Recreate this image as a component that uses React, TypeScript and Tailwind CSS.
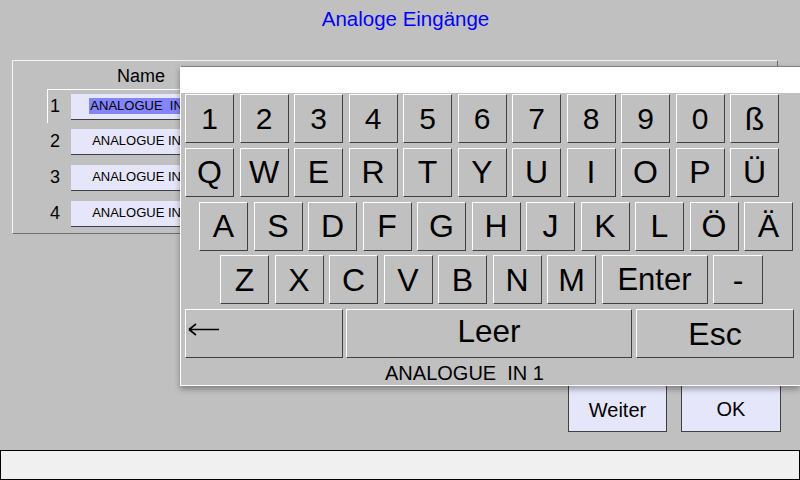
const font = { fontFamily: '"Liberation Sans", Arial, sans-serif' };

const rows = [
  { label: '1', text: 'ANALOGUE  IN 1', active: true },
  { label: '2', text: 'ANALOGUE IN 2' },
  { label: '3', text: 'ANALOGUE IN 3' },
  { label: '4', text: 'ANALOGUE IN 4' },
];

const Key = ({ label, w = 'w-[49px]', size = 'text-[32px]', align = 'justify-center' }: { label: React.ReactNode; w?: string; size?: string; align?: string }) => (
  <div
    className={`${w} ${size} ${align} h-[49px] flex items-center shrink-0 bg-[#c0c0c0] border border-t-white border-l-white border-r-[#404040] border-b-[#404040] text-black leading-none`}
  >
    {label}
  </div>
);

// dünner Pfeil nach links (Backspace)
const ArrowLeft = () => (
  <svg width="34" height="49" viewBox="0 0 34 49" className="-mt-[8px]">
    <path d="M3 24.5 H33 M3 24.5 L10 19 M3 24.5 L10 30" stroke="#000" strokeWidth="1.6" fill="none" />
  </svg>
);

const Keyboard = () => {
  const digits = ['1', '2', '3', '4', '5', '6', '7', '8', '9', '0'];
  const row2 = ['Q', 'W', 'E', 'R', 'T', 'Y', 'U', 'I', 'O', 'P', 'Ü'];
  const row3 = ['A', 'S', 'D', 'F', 'G', 'H', 'J', 'K', 'L', 'Ö', 'Ä'];
  const row4 = ['Z', 'X', 'C', 'V', 'B', 'N', 'M'];

  return (
    <div className="absolute left-[180px] top-[66px] w-[620px] h-[320px] bg-[#c0c0c0] border-t border-t-[#808080] border-l border-l-white border-b border-b-white shadow-[0_3px_6px_rgba(0,0,0,0.35)] flex flex-col">
      <div className="h-[26px] bg-white shrink-0" />
      <div className="pt-[1px] flex flex-col gap-[4.75px]">
        <div className="flex gap-[5.5px] pl-[4px]">
          {digits.map((d) => (
            <Key key={d} label={d} size="text-[30px]" />
          ))}
          <Key label="ß" />
        </div>
        <div className="flex gap-[5.5px] pl-[4px]">
          {row2.map((k) => (
            <Key key={k} label={k} />
          ))}
        </div>
        <div className="flex gap-[5.5px] pl-[18px]">
          {row3.map((k) => (
            <Key key={k} label={k} />
          ))}
        </div>
        <div className="flex gap-[5.5px] pl-[39px]">
          {row4.map((k) => (
            <Key key={k} label={k} />
          ))}
          <Key label="Enter" w="w-[106px]" size="text-[31px]" />
          <Key label="-" w="w-[50px]" />
        </div>
        <div className="flex pl-[4px]">
          <Key label={<ArrowLeft />} w="w-[158px]" align="justify-start" />
          <div className="w-[3px]" />
          <div className="w-[286px] h-[49px] shrink-0 flex justify-center pt-[6px] text-[31.5px] leading-none bg-[#c0c0c0] border border-t-white border-l-white border-r-[#404040] border-b-[#404040]">
            Leer
          </div>
          <div className="w-[4px]" />
          <Key label="Esc" w="w-[158px]" />
        </div>
      </div>
      <div className="flex-1 flex items-center justify-center text-[20px] pr-[52px] whitespace-pre">
        ANALOGUE  IN 1
      </div>
    </div>
  );
};

export default function App() {
  return (
    <div className="relative w-[800px] h-[480px] bg-[#c0c0c0] overflow-hidden text-black" style={font}>
      <div className="h-[38px] leading-[38px] text-center pl-[11px] text-[20.5px] text-[#0000ff]">
        Analoge Eingänge
      </div>

      <div className="mt-[22px] ml-[12px] w-[766px] h-[174px] border border-t-[#f4f4f4] border-l-[#f4f4f4] border-r-[#707070] border-b-[#707070]">
        <div className="h-[28px] flex items-center">
          <div className="ml-[57px] w-[142px] text-center text-[18px] pt-[3px]">Name</div>
        </div>
        {rows.map((r, i) => (
          <div
            key={r.label}
            className={`ml-[34px] w-[200px] flex items-center ${i === 0 ? 'h-[34px] border-t border-l border-white' : 'h-[36px] border-t border-l border-transparent'}`}
          >
            <span className="w-[23px] pl-[2px] text-[18px]">{r.label}</span>
            <div className="w-[142px] h-[26px] bg-[#e6e6fa] border-b border-[#404040] flex items-center justify-center text-[13px] whitespace-pre">
              {r.active ? <span className="bg-[#8484fc] leading-[16px] px-[1px]">{r.text}</span> : r.text}
            </div>
          </div>
        ))}
      </div>

      <div className="mt-[150px] flex justify-end gap-[14px] pr-[19px]">
        <button className="w-[99px] h-[48px] bg-[#e6e6fa] border border-[#404040] text-[20px] pt-[4px]">Weiter</button>
        <button className="w-[100px] h-[48px] bg-[#e6e6fa] border border-[#404040] text-[20px] pt-[2px]">OK</button>
      </div>

      <div className="mt-[18px] h-[30px] bg-[#f0f0f0] border border-black" />

      <Keyboard />
    </div>
  );
}
